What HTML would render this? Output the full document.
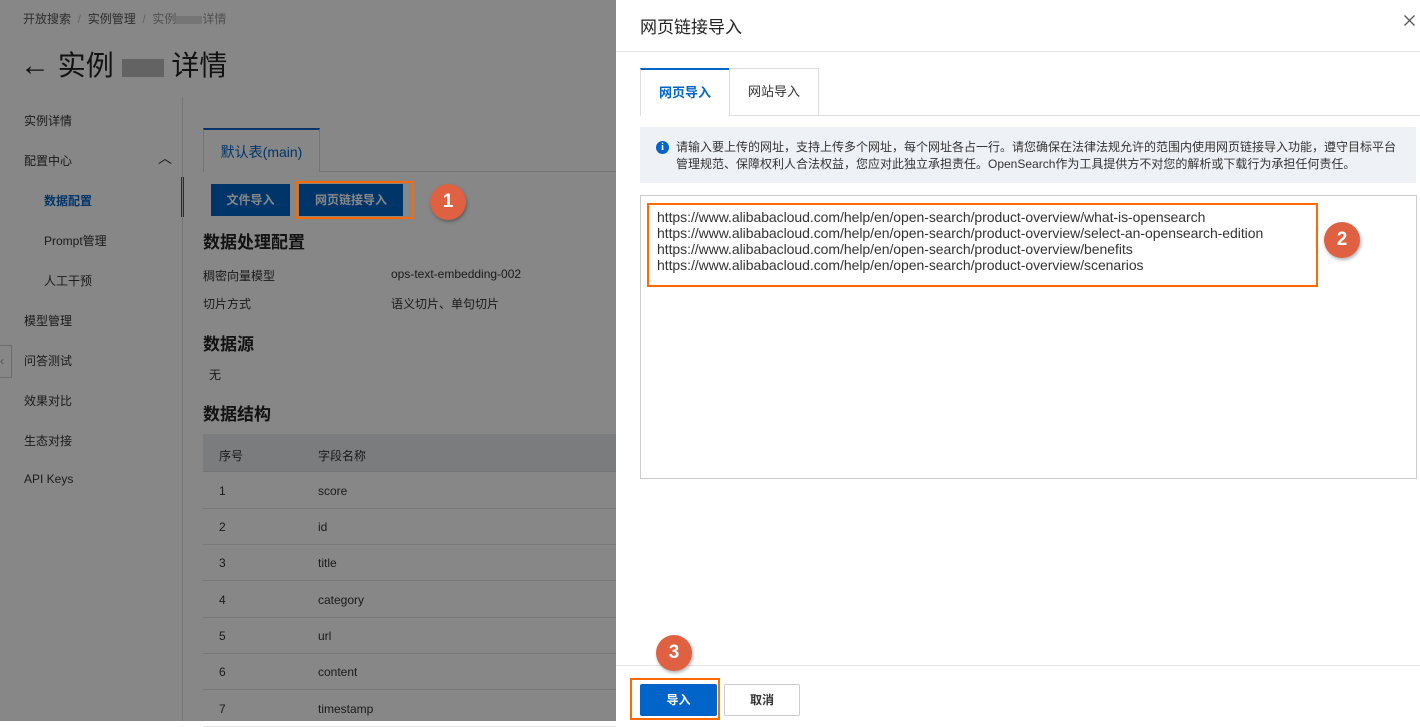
<!DOCTYPE html>
<html><head><meta charset="utf-8"><style>
*{margin:0;padding:0;box-sizing:border-box}
body{width:1420px;height:721px;overflow:hidden;position:relative;background:#fff;font-family:"Liberation Sans","Noto Sans CJK SC",sans-serif;color:#333;font-size:12px}
.a{position:absolute;white-space:nowrap}
.ov{position:absolute;left:0;top:0;width:616px;height:721px;background:rgba(0,0,0,0.47)}
.badge{position:absolute;width:36px;height:36px;border-radius:50%;background:#df6142;color:#fff;font-weight:bold;font-size:19px;text-align:center;line-height:36px;box-shadow:1px 2px 3px rgba(0,0,0,.3)}
.row{position:absolute;left:203px;width:413px;height:36px;border-bottom:1px solid #e3e3e3;font-size:12px}
.row span{position:absolute;top:11px}
</style></head><body>
<div class="a" style="left:23px;top:10px;color:#555">开放搜索 <span style="color:#bbb">&nbsp;/&nbsp;</span> 实例管理 <span style="color:#bbb">&nbsp;/&nbsp;</span> <span style="color:#999">实例<span style="display:inline-block;width:26px;height:8px;background:#ddd;vertical-align:middle"></span>详情</span></div>
<div class="a" style="left:20px;top:44px;font-size:28px;color:#222"><span style="font-size:30px;font-weight:bold">←</span> 实例 <span style="display:inline-block;width:42px;height:18px;background:#bbb;vertical-align:middle"></span> 详情</div>
<div class="a" style="left:24px;top:112px;font-size:12px">实例详情</div>
<div class="a" style="left:24px;top:152px">配置中心</div>
<div class="a" style="left:158px;top:148px;font-size:14px">︿</div>
<div class="a" style="left:44px;top:192px;color:#0064c8;font-weight:bold">数据配置</div>
<div style="position:absolute;left:181px;top:177px;width:3px;height:40px;background:#0064c8"></div>
<div class="a" style="left:44px;top:232px">Prompt管理</div>
<div class="a" style="left:44px;top:272px">人工干预</div>
<div class="a" style="left:24px;top:312px">模型管理</div>
<div class="a" style="left:24px;top:352px">问答测试</div>
<div class="a" style="left:24px;top:392px">效果对比</div>
<div class="a" style="left:24px;top:432px">生态对接</div>
<div class="a" style="left:24px;top:472px">API Keys</div>
<div style="position:absolute;left:0;top:345px;width:12px;height:33px;border:1px solid #ccc;border-left:none;background:#fff;color:#999;font-size:12px;line-height:31px">‹</div>
<div style="position:absolute;left:182px;top:97px;width:1px;height:624px;background:#ddd"></div>
<div style="position:absolute;left:203px;top:171px;width:413px;height:1px;background:#ddd"></div>
<div style="position:absolute;left:203px;top:128px;width:117px;height:44px;border:1px solid #ddd;border-top:2px solid #0064c8;border-bottom:none;background:#fff;color:#0064c8;font-size:14px;text-align:center;line-height:44px">默认表(main)</div>
<div style="position:absolute;left:211px;top:184px;width:79px;height:32px;background:#0064c8;color:#fff;font-weight:bold;text-align:center;line-height:32px">文件导入</div>
<div style="position:absolute;left:299px;top:184px;width:104px;height:32px;background:#0064c8;color:#fff;font-weight:bold;text-align:center;line-height:32px">网页链接导入</div>
<div class="a" style="left:203px;top:228px;font-size:17px;font-weight:bold;color:#222">数据处理配置</div>
<div class="a" style="left:203px;top:267px">稠密向量模型</div><div class="a" style="left:391px;top:267px">ops-text-embedding-002</div>
<div class="a" style="left:203px;top:295px">切片方式</div><div class="a" style="left:391px;top:295px">语义切片、单句切片</div>
<div class="a" style="left:203px;top:330px;font-size:17px;font-weight:bold;color:#222">数据源</div>
<div class="a" style="left:209px;top:366px">无</div>
<div class="a" style="left:203px;top:400px;font-size:17px;font-weight:bold;color:#222">数据结构</div>
<div style="position:absolute;left:203px;top:434px;width:413px;height:38px;background:#e6eaef;border-bottom:1px solid #ddd"></div>
<div class="a" style="left:219px;top:447px">序号</div><div class="a" style="left:318px;top:447px">字段名称</div>
<div class="row" style="top:473px"><span style="left:16px">1</span><span style="left:115px">score</span></div>
<div class="row" style="top:509px"><span style="left:16px">2</span><span style="left:115px">id</span></div>
<div class="row" style="top:545px"><span style="left:16px">3</span><span style="left:115px">title</span></div>
<div class="row" style="top:582px"><span style="left:16px">4</span><span style="left:115px">category</span></div>
<div class="row" style="top:618px"><span style="left:16px">5</span><span style="left:115px">url</span></div>
<div class="row" style="top:654px"><span style="left:16px">6</span><span style="left:115px">content</span></div>
<div class="row" style="top:691px"><span style="left:16px">7</span><span style="left:115px">timestamp</span></div>
<div class="ov"></div>
<div style="position:absolute;left:296px;top:181px;width:118px;height:38px;border:2px solid #ff6a00"></div>
<div class="badge" style="left:430px;top:184px">1</div>
<div class="a" style="left:640px;top:13px;font-size:17px;color:#222">网页链接导入</div>
<svg style="position:absolute;left:1404px;top:15px" width="11" height="11"><path d="M0.5 0.5L10.5 10.5M10.5 0.5L0.5 10.5" stroke="#555" stroke-width="1.3"/></svg>
<div style="position:absolute;left:616px;top:51px;width:804px;height:1px;background:#e3e3e3"></div>
<div style="position:absolute;left:640px;top:115px;width:780px;height:1px;background:#ddd"></div>
<div style="position:absolute;left:640px;top:68px;width:90px;height:48px;border:1px solid #ddd;border-top:2px solid #0064c8;border-bottom:none;background:#fff;color:#0064c8;font-weight:bold;font-size:13px;text-align:center;line-height:46px">网页导入</div>
<div style="position:absolute;left:729px;top:68px;width:90px;height:47px;border:1px solid #ddd;border-bottom:none;color:#333;font-size:13px;text-align:center;line-height:46px">网站导入</div>
<div style="position:absolute;left:640px;top:127px;width:776px;height:56px;background:#eef1f6"></div>
<div style="position:absolute;left:656px;top:141px;width:13px;height:13px;border-radius:50%;background:#0064c8;color:#fff;font-size:10px;font-weight:bold;text-align:center;line-height:13px;font-family:'Liberation Serif',serif">i</div>
<div class="a" style="left:676px;top:139px;font-size:12px;line-height:17px;color:#333">请输入要上传的网址，支持上传多个网址，每个网址各占一行。请您确保在法律法规允许的范围内使用网页链接导入功能，遵守目标平台<br>管理规范、保障权利人合法权益，您应对此独立承担责任。OpenSearch作为工具提供方不对您的解析或下载行为承担任何责任。</div>
<div style="position:absolute;left:640px;top:195px;width:777px;height:284px;border:1px solid #ccc"></div>
<div class="a" style="left:657px;top:209px;font-size:14px;line-height:16px;color:#333;letter-spacing:-0.05px">https://www.alibabacloud.com/help/en/open-search/product-overview/what-is-opensearch<br>https://www.alibabacloud.com/help/en/open-search/product-overview/select-an-opensearch-edition<br>https://www.alibabacloud.com/help/en/open-search/product-overview/benefits<br>https://www.alibabacloud.com/help/en/open-search/product-overview/scenarios</div>
<div style="position:absolute;left:647px;top:203px;width:671px;height:84px;border:2px solid #ff6a00"></div>
<div class="badge" style="left:1324px;top:222px">2</div>
<div style="position:absolute;left:616px;top:665px;width:804px;height:1px;background:#e3e3e3"></div>
<div class="badge" style="left:656px;top:635px">3</div>
<div style="position:absolute;left:640px;top:684px;width:77px;height:32px;background:#0064c8;border-radius:2px;color:#fff;font-weight:bold;text-align:center;line-height:32px">导入</div>
<div style="position:absolute;left:724px;top:684px;width:76px;height:32px;border:1px solid #ccc;border-radius:2px;color:#333;font-weight:bold;text-align:center;line-height:30px">取消</div>
<div style="position:absolute;left:630px;top:678px;width:90px;height:42px;border:2px solid #ff6a00"></div>
</body></html>
